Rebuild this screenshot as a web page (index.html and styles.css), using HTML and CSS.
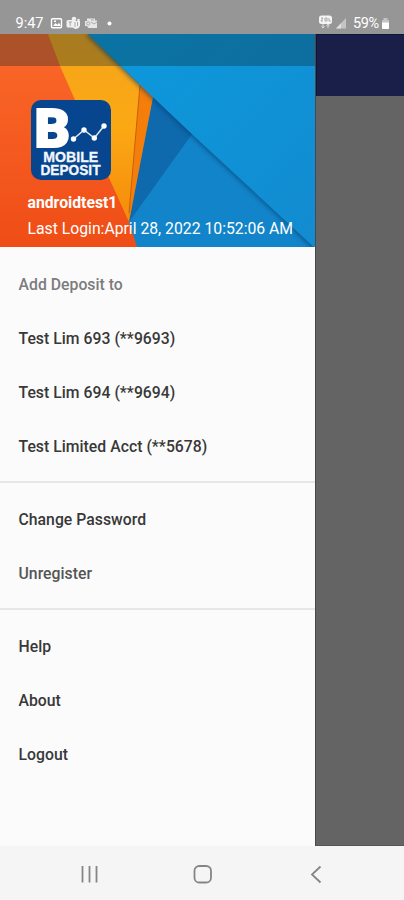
FILE: index.html
```html
<!DOCTYPE html>
<html lang="en">
<head>
<meta charset="utf-8">
<title>Mobile Deposit</title>
<link rel="stylesheet" href="styles.css">
</head>
<body>
<div class="phone">
  <header class="status">
    <span class="time">9:47</span>
    <svg class="notifications" width="64" height="16" viewBox="50 15 64 16">
      <rect x="51.500" y="18.700" width="10" height="9" rx="1" fill="none" stroke="#fff" stroke-width="1.400"/>
      <path d="M53 26l2.500-3 2 1.700 1.500-2 2 3.300zM54 20.500h2v1.500h-2z" fill="#fff"/>
      <g fill="#f0f0f0"><rect x="66.500" y="20" width="7.500" height="7.500" rx="1.500"/><circle cx="74" cy="19" r="2.300"/><path d="M72 21h8v4.500q-1 3.500-5 3.500l-3-2z"/><circle cx="78.500" cy="20" r="1.300"/></g>
      <path d="M68.500 22h3.500M70.200 22v4M75 22v5M77.500 22v4" stroke="#aaa" fill="none"/>
      <path d="M87 18.500h8v2h2v7.500h-8.500l-1.500-2h-2v-5h2z" fill="#e6e6e6"/>
      <circle cx="88.300" cy="23.500" r="1.600" fill="none" stroke="#aaa"/>
      <path d="M91 22l3 2 3-2M91 20h3" stroke="#aaa" fill="none"/>
      <circle cx="109.500" cy="23.500" r="2" fill="#fff"/>
    </svg>
    <span class="spacer"></span>
    <svg class="signal" width="30" height="16" viewBox="318 15 30 16">
      <rect x="319" y="15.500" width="13" height="8.500" rx="2.500" fill="#f4f4f4"/>
      <path d="M321 18h2l-2 3h2M325 18v3h2v-3zM329 18v3h2" stroke="#999" stroke-width=".8" fill="none"/>
      <path d="M323 24v4m-1.700-1.700l1.700 1.700 1.700-1.700M328 28v-4m-1.700 1.700l1.700-1.700 1.700 1.700" stroke="#ddd" stroke-width="1" fill="none"/>
      <path d="M336 28.500L346 18v10.500z" fill="#c4c4c4"/><path d="M336 28.500l5-5.200v5.200z" fill="#dedede"/>
    </svg>
    <span class="percent">59%</span>
    <svg class="battery" width="9" height="13" viewBox="0 0 9 13"><path d="M2.500 1h4v2H8v9H1V3h1.500z" fill="#c4c4c4"/><path d="M1 5.500h7v5.500q0 1-1 1H2q-1 0-1-1z" fill="#fff"/></svg>
  </header>
  <main class="stage">
    <aside class="drawer">
      <section class="account">
        <svg class="backdrop" width="315" height="213" viewBox="0 34 315 213">
          <defs>
            <linearGradient id="red" x2="0" y2="1"><stop stop-color="#fb692a"/><stop offset="1" stop-color="#ef4d16"/></linearGradient>
            <linearGradient id="gold" x2="0" y2="1"><stop stop-color="#f5a51b"/><stop offset=".5" stop-color="#fba814"/><stop offset="1" stop-color="#f58b0b"/></linearGradient>
            <linearGradient id="sky" x2="1" y2="1"><stop stop-color="#0c9add"/><stop offset="1" stop-color="#138bd0"/></linearGradient>
            <filter id="blur"><feGaussianBlur stdDeviation="2"/></filter>
            <clipPath id="below"><path d="M0 34H88L153 97 192 134 314 247H0z"/></clipPath>
          </defs>
          <path d="M0 34h315v213H0z" fill="#1284c9"/>
          <path d="M153 97L192 134 129 222z" fill="#0e69ad"/>
          <path d="M139 83L153 97 129 222 126 210z" fill="#f57d0a"/>
          <path d="M40 34H88L140 85 129 215V222L100 210z" fill="url(#gold)"/>
          <path d="M140 85L129 213" stroke="#c95f0c" stroke-width="1"/>
          <path d="M0 34H48L60 66 75 100 110 180 129 222 137 247H0z" fill="url(#red)"/>
          <g clip-path="url(#below)"><path d="M88 34L153 97 192 134 314 247" fill="none" stroke="#073f70" stroke-opacity=".65" stroke-width="4" filter="url(#blur)"/></g>
          <path d="M88 34H315V247H314L192 134 153 97z" fill="url(#sky)"/>
          <path d="M0 34h315v32H0z" fill="#09252d" fill-opacity=".32"/>
        </svg>
        <svg class="logo" width="80" height="80" viewBox="31 100 80 80">
          <rect x="31" y="100" width="80" height="80" rx="10" fill="#07458f"/>
          <text x="34.500" y="146.500" class="logo-letter" textLength="35.500" lengthAdjust="spacingAndGlyphs">B</text>
          <path d="M73.500 139L84 130l10.300 8L104 126" fill="none" stroke="#dce8f5" stroke-width="1.500"/>
          <g fill="#fff"><circle cx="73.500" cy="139" r="2.700"/><circle cx="84" cy="130" r="2.700"/><circle cx="94.300" cy="138" r="2.700"/><circle cx="104" cy="126" r="2.700"/></g>
          <text x="43.300" y="161.500" class="logo-word" textLength="55" lengthAdjust="spacingAndGlyphs">MOBILE</text>
          <text x="40.500" y="175.200" class="logo-word" textLength="60" lengthAdjust="spacingAndGlyphs">DEPOSIT</text>
        </svg>
        <strong class="user">androidtest1</strong>
        <span class="login">Last Login:April 28, 2022 10:52:06 AM</span>
      </section>
      <nav class="menu">
        <h2 class="row heading">Add Deposit to</h2>
        <a class="row">Test Lim 693 (**9693)</a>
        <a class="row">Test Lim 694 (**9694)</a>
        <a class="row">Test Limited Acct (**5678)</a>
        <hr class="divider">
        <a class="row">Change Password</a>
        <a class="row muted">Unregister</a>
        <hr class="divider">
        <a class="row">Help</a>
        <a class="row">About</a>
        <a class="row">Logout</a>
      </nav>
    </aside>
    <div class="page"><div class="toolbar"></div></div>
  </main>
  <footer class="navbar">
    <svg width="404" height="54" viewBox="0 846 404 54" fill="none" stroke="#858585" stroke-width="1.800">
      <path d="M82.500 866v16.500M89.500 866v16.500M96.500 866v16.500"/>
      <rect x="194.500" y="866" width="16.500" height="16.500" rx="4.800"/>
      <path d="M320.500 866.500L312 874.500l8.500 8"/>
    </svg>
  </footer>
</div>
</body>
</html>
```

FILE: styles.css
```css
* { box-sizing: border-box; }
body { margin: 0; font-family: Roboto, "Liberation Sans", sans-serif; }
.phone { width: 404px; height: 900px; display: flex; flex-direction: column; overflow: hidden; background: #f5f5f5; }
.status { height: 34px; flex: none; display: flex; align-items: flex-start; padding: 15px 14px 0 15.500px; background: #969696; color: #fff; font-size: 14.500px; line-height: 17px; }
.time { width: 34.500px; }
.spacer { flex: 1; }
.signal { margin-right: 5px; }
.percent { width: 27px; letter-spacing: -.4px; }
.battery { margin: 2px 0 0 1px; }
.stage { height: 812px; flex: none; display: flex; background: #646464; }
.drawer { width: 315px; flex: none; background: #fbfbfb; }
.account { position: relative; height: 213px; display: flex; flex-direction: column; padding: 66px 0 0 27.500px; color: #fff; font-size: 15.750px; }
.backdrop { position: absolute; left: 0; top: 0; }
.logo, .user, .login { position: relative; flex: none; }
.logo { margin-left: 3.500px; overflow: visible; }
.logo-letter { font: 900 53px Roboto, sans-serif; fill: #fff; stroke: #fff; stroke-width: 2px; }
.logo-word { font: 700 15px "Liberation Sans", sans-serif; fill: #f3f7fc; stroke: #f3f7fc; stroke-width: .3px; }
.user { margin-top: 12px; line-height: 21px; font-weight: 700; font-size: 15.750px; }
.login { margin-top: 5px; line-height: 21px; white-space: nowrap; }
.menu { display: flex; flex-direction: column; padding-top: 10px; }
.row { height: 54px; flex: none; margin: 0; padding-left: 18.500px; line-height: 56px; font-size: 15.750px; letter-spacing: .03px; font-weight: 500; color: #383838; white-space: nowrap; }
.heading { color: #7c7c7c; }
.muted { color: #555; }
.divider { width: 100%; height: 2px; margin: 8px 0 9px; border: 0; background: #e7e7e7; }
.page { flex: 1; border-left: 1px solid #484848; border-bottom: 1px solid #555; }
.toolbar { height: 62px; background: #191f48; border-left: 1px solid #101438; border-top: 1px solid #101438; }
.navbar { height: 54px; flex: none; }
.navbar svg { display: block; }
```
